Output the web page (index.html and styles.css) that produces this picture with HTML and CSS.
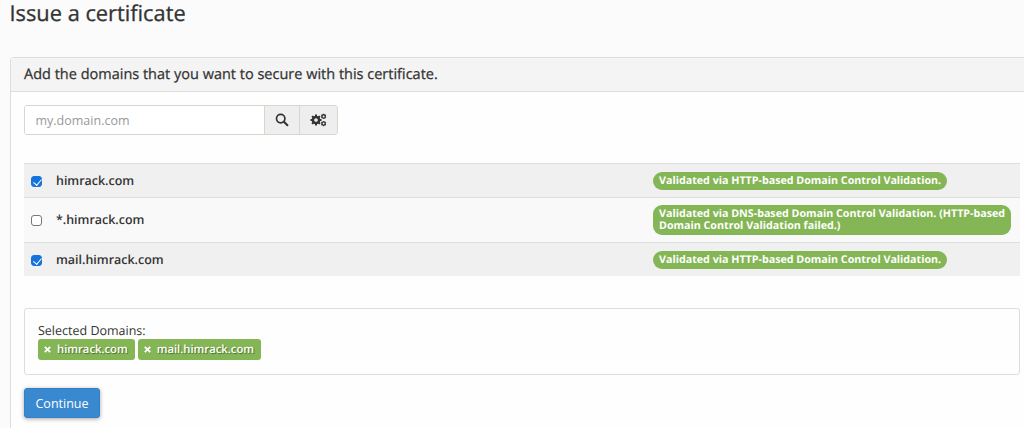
FILE: index.html
```
<!DOCTYPE html>
<html lang="en">
<head>
  <meta charset="UTF-8" />
  <meta name="viewport" content="width=device-width, initial-scale=1.0" />
  <title>Issue a certificate</title>
  <link rel="stylesheet" href="styles.css">
</head>
<body>
  <h1>Issue a certificate</h1>
  <div class="panel">
    <div class="panel-heading"><span>Add the domains that you want to secure with this certificate.</span></div>
    <div class="panel-body">
      <div class="search-group">
        <input type="text" placeholder="my.domain.com" />
        <button type="button" class="addon search-btn" aria-label="Search">
          <svg width="14" height="14" viewBox="0 0 14 14"><circle cx="5.7" cy="5.6" r="4.2" fill="none" stroke="#333" stroke-width="1.7"/><path d="M8.9 8.8l3.5 3.4" stroke="#333" stroke-width="2.1" stroke-linecap="round"/></svg>
        </button>
        <button type="button" class="addon settings-btn" aria-label="Settings">
          <svg width="17" height="14" viewBox="0 0 17 14" fill="none" stroke="#333">
            <circle cx="6" cy="7" r="3.1" stroke-width="2.5"/>
            <path d="M6 1.5v2M6 10.5v2M.5 7h2M9.5 7h2M2.1 3.1l1.4 1.4M8.5 9.5l1.4 1.4M2.1 10.9l1.4-1.4M8.5 4.5l1.4-1.4" stroke-width="2"/>
            <circle cx="13.6" cy="3.4" r="1.7" stroke-width="1.4"/>
            <circle cx="13.6" cy="10.6" r="1.7" stroke-width="1.4"/>
            <path d="M13.6.7v.8M13.6 5.3v.8M11.3 2l.6.4M15.3 4.4l.6.4M11.3 4.8l.6-.4M15.3 2.4l.6-.4M13.6 7.9v.8M13.6 12.5v.8M11.3 9.2l.6.4M15.3 11.6l.6.4M11.3 12l.6-.4M15.3 9.6l.6-.4" stroke-width="1.2"/>
          </svg>
        </button>
      </div>

      <table class="domains">
        <tbody>
          <tr>
            <td class="check-cell"><input type="checkbox" checked /></td>
            <td class="name-cell">himrack.com</td>
            <td class="status-cell"><span class="badge">Validated via HTTP-based Domain Control Validation.</span></td>
          </tr>
          <tr class="tall">
            <td class="check-cell"><input type="checkbox" /></td>
            <td class="name-cell">*.himrack.com</td>
            <td class="status-cell"><span class="badge">Validated via DNS-based Domain Control Validation. (HTTP-based<br>Domain Control Validation failed.)</span></td>
          </tr>
          <tr>
            <td class="check-cell"><input type="checkbox" checked /></td>
            <td class="name-cell">mail.himrack.com</td>
            <td class="status-cell"><span class="badge">Validated via HTTP-based Domain Control Validation.</span></td>
          </tr>
        </tbody>
      </table>

      <div class="selected">
        <div class="selected-title">Selected Domains:</div>
        <div class="tags">
          <span class="tag"><svg width="7" height="7" viewBox="0 0 7 7"><path d="M.8.8l5.4 5.4M6.2.8L.8 6.2"/></svg>himrack.com</span>
          <span class="tag"><svg width="7" height="7" viewBox="0 0 7 7"><path d="M.8.8l5.4 5.4M6.2.8L.8 6.2"/></svg>mail.himrack.com</span>
        </div>
      </div>

      <button type="button" class="continue">Continue</button>
    </div>
  </div>
</body>
</html>
```
FILE: styles.css
```
* {
  box-sizing: border-box;
}

body {
  margin: 0;
  background: #fbfbfb;
  color: #333;
  font-family: "Open Sans", sans-serif;
  font-size: 12.5px;
  text-rendering: geometricPrecision;
}

h1 {
  margin: 0 0 29px 9.5px;
  font-size: 21.8px;
  line-height: 28px;
  font-weight: 400;
  -webkit-text-stroke: 0.3px #333;
}

.panel {
  margin-left: 10px;
  height: 371px;
  background: #fefefe;
  border: 1px solid #ddd;
  border-right: none;
  border-bottom: none;
  border-radius: 4px 0 0 0;
}

.panel-heading {
  height: 34px;
  padding-left: 13px;
  line-height: 33px;
  font-size: 14.5px;
  -webkit-text-stroke: 0.25px #333;
  background: #f4f4f4;
  border-bottom: 1px solid #ddd;
  white-space: nowrap;
}

.panel-body {
  padding: 13px 4px 0 13px;
}

.search-group {
  display: flex;
  width: 314px;
  height: 30px;
  border: 1px solid #d2d9cd;
  border-radius: 3px;
  overflow: hidden;
}

.search-group input {
  flex: 1;
  min-width: 0;
  padding: 0 10.5px;
  border: none;
  background: #fff;
  font: inherit;
}

.search-group input::placeholder {
  color: #999;
}

.addon {
  display: flex;
  align-items: center;
  justify-content: center;
  padding: 0 1px 0 0;
  border: none;
  border-left: 1px solid #d2d9cd;
  background: #eee;
}

.search-btn {
  width: 35px;
}

.settings-btn {
  width: 38px;
}

.domains {
  width: 100%;
  margin-top: 28px;
  border-collapse: separate;
  border-spacing: 0;
  table-layout: fixed;
}

.domains td {
  height: 34px;
  padding: 0;
  border-top: 1px solid #ddd;
  background: #f0f0f0;
  vertical-align: middle;
}

.domains .tall td {
  height: 45px;
  background: #f9f9f9;
}

.check-cell {
  width: 32px;
}

.check-cell input {
  display: block;
  appearance: none;
  width: 11px;
  height: 11px;
  margin: 1px 0 0 7px;
  border: 1px solid #777;
  border-radius: 3px;
  background: #fff;
}

.check-cell input:checked {
  border-color: #1672dc;
  background: #1672dc;
}

.check-cell input:checked::after {
  content: "";
  display: block;
  width: 4px;
  height: 7px;
  margin: 0 0 0 2.5px;
  border: solid #fff;
  border-width: 0 1px 1px 0;
  transform: translateY(0.3px) rotate(40deg);
}

.domains .name-cell {
  padding-bottom: 1px;
  font-size: 12.45px;
  font-weight: 600;
}

.domains .status-cell {
  width: 367px;
}

.badge {
  display: inline-block;
  padding: 3px 6px;
  border-radius: 9px;
  background: #84b655;
  color: #fff;
  font-size: 10.7px;
  line-height: 12px;
  font-weight: 700;
  white-space: nowrap;
  vertical-align: middle;
}

.selected {
  height: 67px;
  margin-top: 32px;
  padding: 13px;
  border: 1px solid #ddd;
  border-radius: 3px;
  background: #fefefe;
}

.selected-title {
  line-height: 17px;
}

.tags {
  display: flex;
  gap: 3px;
}

.tag {
  display: flex;
  align-items: center;
  height: 21px;
  padding: 0 7px 0 6px;
  border-radius: 3px;
  background: #84b655;
  color: #fff;
  font-size: 11.25px;
  line-height: 19px;
  font-weight: 600;
  text-shadow: 1px 1px 1px rgba(0, 0, 0, 0.4);
}

.tag svg {
  margin-right: 6px;
  fill: none;
  stroke: #fff;
  stroke-width: 1.8;
}

.continue {
  display: block;
  width: 76px;
  height: 30px;
  margin-top: 13px;
  padding: 0;
  border: 1px solid #3380c7;
  border-radius: 3px;
  background: #3889d0;
  color: #fff;
  font: inherit;
  box-shadow: 0 1px 4px rgba(0, 0, 0, 0.35);
}
```
